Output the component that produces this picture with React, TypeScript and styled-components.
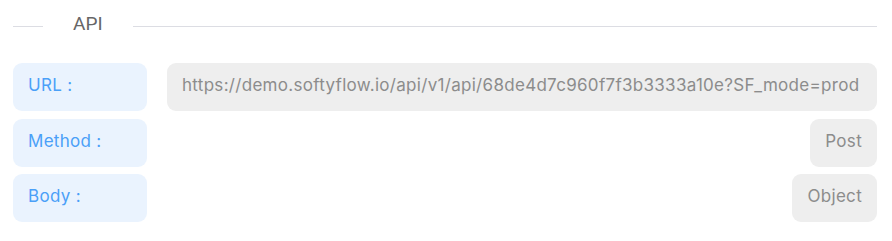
import { Fragment } from "react";
import styled, { createGlobalStyle } from "styled-components";

const Global = createGlobalStyle`
  body {
    margin: 0;
    background: #ffffff;
    font-family: "Inter", "Noto Sans", sans-serif;
  }
`;

const Panel = styled.div`
  padding: 12px 15px 0 13px;
  display: flex;
  flex-direction: column;
  gap: 23px;
`;

const Legend = styled.div`
  display: flex;
  align-items: center;
  gap: 30px;

  &::before,
  &::after {
    content: "";
    height: 1px;
    background: #dcdde3;
  }

  &::before {
    width: 30px;
  }

  &::after {
    flex: 1;
  }
`;

const LegendText = styled.span`
  font-family: "Roboto", sans-serif;
  font-size: 19px;
  color: #666666;
  line-height: 24px;
  padding-bottom: 4px;
`;

const Fields = styled.div`
  display: grid;
  grid-template-columns: 134px 1fr;
  column-gap: 20px;
  row-gap: 7.5px;
`;

const Label = styled.div`
  height: 48px;
  box-sizing: border-box;
  padding: 0 15px 4px;
  display: flex;
  align-items: center;
  border-radius: 9px;
  background: #eaf3fe;
  color: #4aa0f8;
  font-size: 17px;
  letter-spacing: 0.3px;
`;

const Value = styled.div<{ $wide?: boolean }>`
  height: 48px;
  box-sizing: border-box;
  padding: 0 15px 4px;
  display: flex;
  align-items: center;
  justify-self: ${(p) => (p.$wide ? "stretch" : "end")};
  border-radius: 9px;
  background: #eeeeee;
  color: #8c8c8c;
  font-size: 17px;
  letter-spacing: 0.3px;
  white-space: nowrap;
  overflow: hidden;
`;

const rows = [
  { label: "URL :", value: "https://demo.softyflow.io/api/v1/api/68de4d7c960f7f3b3333a10e?SF_mode=prod", wide: true },
  { label: "Method :", value: "Post" },
  { label: "Body :", value: "Object" },
];

export default function App() {
  return (
    <>
      <Global />
      <Panel>
        <Legend>
          <LegendText>API</LegendText>
        </Legend>
        <Fields>
          {rows.map((r) => (
            <Fragment key={r.label}>
              <Label>{r.label}</Label>
              <Value $wide={r.wide}>{r.value}</Value>
            </Fragment>
          ))}
        </Fields>
      </Panel>
    </>
  );
}
